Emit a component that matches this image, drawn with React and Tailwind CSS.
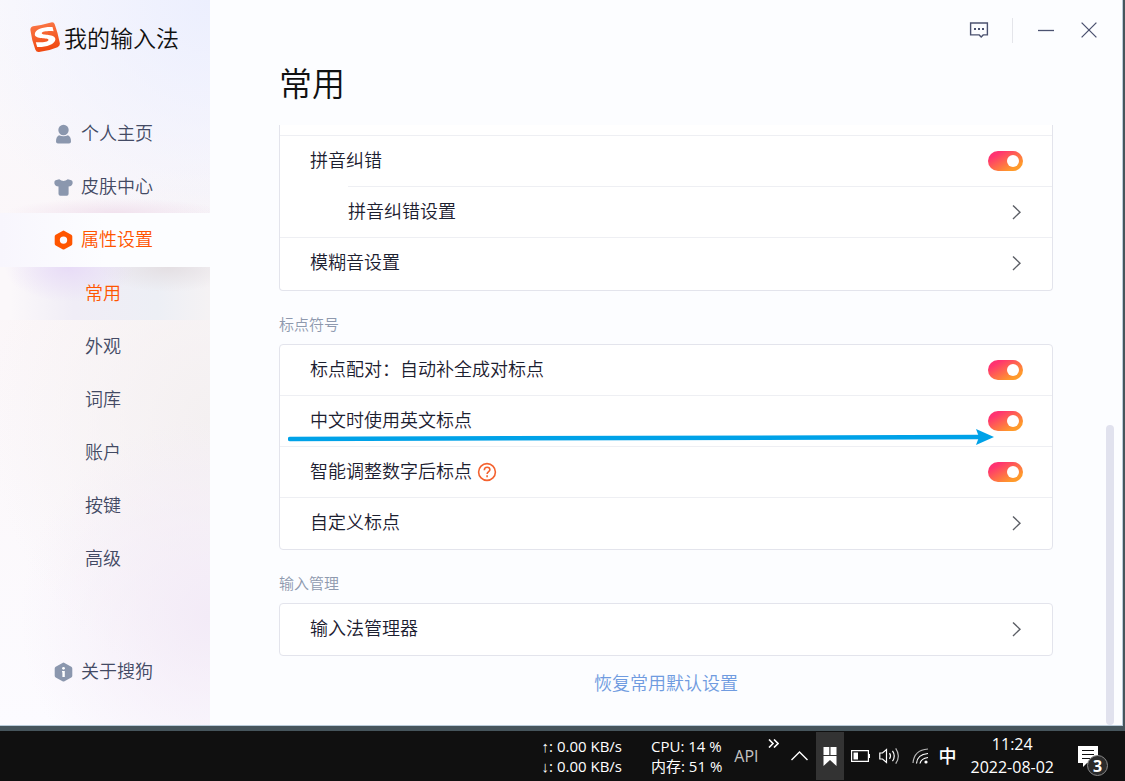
import { useState } from 'react'

const mainNav = [
  { id: 'home', label: '个人主页', icon: UserIcon },
  { id: 'skin', label: '皮肤中心', icon: ShirtIcon },
  { id: 'settings', label: '属性设置', icon: HexIcon }
]

const subNav = ['常用', '外观', '词库', '账户', '按键', '高级']

function Logo() {
  return (
    <svg className="size-[31px] shrink-0" viewBox="0 0 31 31" aria-hidden="true">
      <defs>
        <linearGradient id="logo" x1="0" y1="0" x2="0.2" y2="1">
          <stop offset="0" stopColor="#fb7a4a" />
          <stop offset="1" stopColor="#f04a12" />
        </linearGradient>
      </defs>
      <path
        d="M3 4.2Q12 3 21 0.4Q24 -0.3 24.8 2.4Q28 11 29.8 21Q30.3 24 27.5 25.2Q18 29.3 9 30Q6.3 30.2 5.3 27.4Q1.6 18 0.4 8Q0.3 4.7 3 4.2Z"
        fill="url(#logo)"
      />
      <path
        d="M22.5 5C14 4.600 5 7 4.800 12.200C4.700 17.800 18.500 15.200 18.500 17.800C18.500 20.300 11 20.600 5.800 20.200L7.200 25C15 25.400 25.300 22.600 25.400 17.200C25.500 11.400 11.800 13.700 11.800 11.200C11.800 9.400 18 8.800 23.600 9.200Z"
        fill="#fff"
      />
    </svg>
  )
}

function UserIcon() {
  return (
    <svg className="size-5" viewBox="0 0 20 20" fill="currentColor" aria-hidden="true">
      <circle cx="10.5" cy="6" r="5.200" />
      <path d="M6 11.200Q10.500 13.400 15 11.200Q18 12.500 18 17.500Q18 19.500 16 19.500H5Q3 19.500 3 17.500Q3 12.500 6 11.200Z" />
    </svg>
  )
}

function ShirtIcon() {
  return (
    <svg className="size-5" viewBox="0 0 20 20" fill="currentColor" aria-hidden="true">
      <path d="M6.200 2.200Q10.500 5.600 14.800 2.200L18.400 3.200Q19.600 3.700 19.600 4.900V6.500Q18.800 9.300 15.600 9.500V16.700Q15.600 18.700 13.800 18.700H7.300Q5.500 18.700 5.500 16.700V9.500Q2.200 9.300 1.400 6.500V4.900Q1.400 3.700 2.600 3.200Z" />
    </svg>
  )
}

function HexIcon() {
  return (
    <svg className="size-5" viewBox="0 0 20 20" aria-hidden="true">
      <path
        d="M9.500 0.900Q10.500 0.300 11.500 0.900L18.300 4.700Q19.300 5.300 19.300 6.400V13.800Q19.300 14.900 18.300 15.500L11.500 19.300Q10.500 19.900 9.500 19.300L2.700 15.500Q1.700 14.900 1.700 13.800V6.400Q1.700 5.300 2.700 4.700ZM10.500 6.400A3.700 3.700 0 1 0 10.500 13.800A3.700 3.700 0 1 0 10.500 6.400Z"
        fill="currentColor"
        fillRule="evenodd"
      />
    </svg>
  )
}

function AboutIcon() {
  return (
    <svg className="size-5" viewBox="0 0 20 20" aria-hidden="true">
      <path
        d="M9.500 0.900Q10.500 0.300 11.500 0.900L18.300 4.700Q19.300 5.300 19.300 6.400V13.800Q19.300 14.900 18.300 15.500L11.500 19.300Q10.500 19.900 9.500 19.300L2.700 15.500Q1.700 14.900 1.700 13.800V6.400Q1.700 5.300 2.700 4.700Z"
        fill="currentColor"
      />
      <circle cx="10.500" cy="6.300" r="1.400" fill="#fff" />
      <path d="M9 9H11.800V15H9.400V10.300H9Z" fill="#fff" />
    </svg>
  )
}

function Chevron() {
  return (
    <svg className="mr-px h-4 w-[10px]" viewBox="0 0 10 16" fill="none" stroke="#5c5f66" strokeWidth="1.400" aria-hidden="true">
      <path d="M1 1.500L8 8.200L1 15" />
    </svg>
  )
}

function Toggle({ label }) {
  const [on, setOn] = useState(true)
  return (
    <input
      type="checkbox"
      role="switch"
      aria-label={label}
      checked={on}
      onChange={() => setOn(!on)}
      className="h-5 w-[35px] cursor-pointer appearance-none rounded-full bg-gray-300 p-1 before:block before:size-3 before:rounded-full before:bg-white checked:bg-[linear-gradient(150deg,#ff3370_20%,#ff9a2b_80%)] checked:pl-[19px]"
    />
  )
}

function SwitchRow({ label, help, border = 'border-b' }) {
  return (
    <div className={`flex h-[51px] items-center justify-between border-[#eeeff3] pr-[29px] pl-[30px] ${border}`}>
      <span className="flex items-center gap-[5px]">
        <span className="pb-1">{label}</span>
        {help && (
          <button aria-label="帮助" className="text-[#f4622f]">
            <svg className="size-5" viewBox="0 0 20 20" fill="none" stroke="currentColor" strokeWidth="1.600" aria-hidden="true">
              <circle cx="10" cy="10" r="8.400" />
              <path d="M7.300 8.200C7.300 6.300 8.500 5.200 10.100 5.200C11.700 5.200 12.900 6.300 12.900 7.800C12.900 9.600 10.100 9.700 10.100 12" />
              <path d="M10.100 13.300V15.300" />
            </svg>
          </button>
        )}
      </span>
      <Toggle label={label} />
    </div>
  )
}

function LinkRow({ label }) {
  return (
    <button className="flex h-[51px] w-full items-center justify-between pr-[29px] pb-px pl-[30px] text-left">
      <span className="pb-1">{label}</span>
      <Chevron />
    </button>
  )
}

// Nested option, its top line starts where its label starts
function SubLinkRow({ label }) {
  return (
    <div className="border-b border-[#eeeff3] pl-[68px]">
      <button className="flex h-[51px] w-full items-center justify-between border-t border-[#eeeff3] pr-[29px] text-left">
        <span className="pb-1">{label}</span>
        <Chevron />
      </button>
    </div>
  )
}

function Section({ title, children }) {
  return (
    <section>
      <h2 className="flex h-[53px] items-end pb-[10px] text-[15px] leading-5 text-[#8e99ae]">{title}</h2>
      <div className="rounded border border-[#e3e4ec] bg-white">{children}</div>
    </section>
  )
}

function Sidebar() {
  const [active, setActive] = useState('常用')
  return (
    <aside className="flex w-[210px] shrink-0 flex-col bg-[radial-gradient(ellipse_250px_260px_at_100%_0%,#eceffe_0%,transparent_100%),radial-gradient(ellipse_190px_200px_at_100%_85%,#f3ebf7_0%,transparent_100%),radial-gradient(ellipse_220px_260px_at_100%_58%,#f4f0f1_0%,transparent_100%),linear-gradient(#faf9fd,#fbf6f8_40%,#fcfbff)] text-[#434a64]">
      <div className="flex h-[107px] items-start gap-[3px] pt-[22px] pl-[30px]">
        <Logo />
        <span className="text-[23px] leading-[31px] text-[#111]">我的输入法</span>
      </div>
      <nav className="flex flex-1 flex-col">
        {mainNav.map(({ id, label, icon: Icon }) => (
          <a
            key={id}
            href={`#${id}`}
            className={
              id === 'settings'
                ? 'flex h-[54px] items-center gap-2 bg-linear-to-r from-[#f8f6fd] to-[#fcfdff] to-50% pl-[53px] text-[#ff5500]'
                : `flex h-[53px] items-center gap-2 pl-[53px] ${id === 'skin' ? 'bg-[radial-gradient(ellipse_110px_15px_at_55%_100%,#f1e2ee_0%,transparent_100%)]' : ''}`
            }
          >
            <span className={id === 'settings' ? '' : 'text-[#8b97ae]'}>
              <Icon />
            </span>
            <span className="pb-1">{label}</span>
          </a>
        ))}
        {subNav.map((label) => (
          <a
            key={label}
            href={`#${label}`}
            onClick={() => setActive(label)}
            className={
              label === active
                ? 'flex h-[53px] items-center bg-[radial-gradient(ellipse_65px_35px_at_33%_0%,#e8dcf7_0%,transparent_100%),radial-gradient(ellipse_70px_25px_at_80%_0%,#e4dfe3_0%,transparent_100%),linear-gradient(to_right,#fbf8fa_5%,#f0edf6_35%,#edeff5_75%,#f5f2f4)] pb-1 pl-[85px] text-[#ff5500]'
                : 'flex h-[53px] items-center pb-1 pl-[85px]'
            }
          >
            {label}
          </a>
        ))}
        <a href="#about" className="mt-auto mb-[27px] flex h-[53px] items-center gap-2 pl-[53px]">
          <span className="text-[#8b97ae]">
            <AboutIcon />
          </span>
          <span className="pb-1">关于搜狗</span>
        </a>
      </nav>
    </aside>
  )
}

function WindowControls() {
  return (
    <div className="flex h-[60px] items-center justify-end pr-[25px] text-[#4b5270]">
      <button aria-label="反馈" className="mr-[23px]">
        <svg className="size-5" viewBox="0 0 20 20" fill="none" stroke="currentColor" strokeWidth="1.400" aria-hidden="true">
          <path d="M1.600 3H18.400V14.900H14.200L12.200 17L10.200 14.900H1.600Z" />
          <path d="M5 8.900H7M9 8.900H11M13 8.900H15" strokeWidth="2" />
        </svg>
      </button>
      <span className="h-[25px] w-px bg-[#e4e5ea]" />
      <button aria-label="最小化" className="ml-[25px]">
        <svg className="h-5 w-4" viewBox="0 0 16 20" stroke="currentColor" strokeWidth="1.300" aria-hidden="true">
          <path d="M0 10.500H16" />
        </svg>
      </button>
      <button aria-label="关闭" className="ml-[27px]">
        <svg className="size-4" viewBox="0 0 16 16" stroke="currentColor" strokeWidth="1.300" aria-hidden="true">
          <path d="M0.600 0.600L15.400 15.400M15.400 0.600L0.600 15.400" />
        </svg>
      </button>
    </div>
  )
}

// Blue marker drawn across the "中文时使用英文标点" row
function Arrow() {
  return (
    <svg
      className="pointer-events-none absolute bottom-[2px] left-2 h-4 w-[calc(100%-66px)]"
      viewBox="0 0 706 16"
      preserveAspectRatio="none"
      aria-hidden="true"
    >
      <path d="M2 10L692 8" stroke="#00a2e8" strokeWidth="4.500" strokeLinecap="round" />
      <path d="M688 0L706 8L688 16L691 8Z" fill="#00a2e8" />
    </svg>
  )
}

function Taskbar() {
  return (
    <footer className="flex h-[50px] shrink-0 items-center justify-end bg-[#101010] font-['Open_Sans','Liberation_Sans','Noto_Sans_CJK_SC',sans-serif] text-[15px] leading-5 font-normal text-white">
      <div className="mr-[29px] whitespace-nowrap">
        <p>↑: 0.00 KB/s</p>
        <p>↓: 0.00 KB/s</p>
      </div>
      <div className="mr-3 whitespace-nowrap">
        <p>CPU: 14 %</p>
        <p>内存: 51 %</p>
      </div>
      <span className="text-base text-[#c4c4c4]">API</span>
      <button aria-label="更多" className="mb-[26px] ml-[9px]">
        <svg className="h-[9px] w-[11px]" viewBox="0 0 11 9" fill="none" stroke="#fff" strokeWidth="1.600" aria-hidden="true">
          <path d="M1 0.500L5 4.500L1 8.500M6 0.500L10 4.500L6 8.500" />
        </svg>
      </button>
      <button aria-label="显示隐藏的图标" className="ml-3">
        <svg className="h-[10px] w-[17px]" viewBox="0 0 17 10" fill="none" stroke="#fff" strokeWidth="1.400" aria-hidden="true">
          <path d="M0.500 9L8.500 1L16.500 9" />
        </svg>
      </button>
      <button aria-label="书签" className="ml-2 flex h-12 w-7 items-center justify-center bg-[#333]">
        <svg className="h-[19px] w-[14px]" viewBox="0 0 14 19" fill="#fff" aria-hidden="true">
          <path d="M0.500 0H6.300V8H0.500ZM7.500 0H13.500V8H7.500ZM0.500 9H13.500V19L7 13L0.500 19Z" />
        </svg>
      </button>
      <svg className="ml-[7px] h-3 w-[19px]" viewBox="0 0 19 12" fill="none" stroke="#fff" strokeWidth="1.200" aria-hidden="true">
        <path d="M0.600 0.600H17.400V11.400H0.600ZM18.400 4V8" />
        <path d="M2.500 2.500H7V9.500H2.500Z" fill="#fff" stroke="none" />
      </svg>
      <svg className="ml-[9px] h-[18px] w-[22px]" viewBox="0 0 22 18" fill="none" stroke="#fff" strokeWidth="1.200" aria-hidden="true">
        <path d="M0.800 6H3.500L7.500 2.500V15.500L3.500 12H0.800ZM10.500 6.200Q12.500 9 10.500 11.800M13.500 3.800Q17 9 13.500 14.200" />
        <path d="M16.700 1.300Q22 9 16.700 16.700" opacity="0.700" />
      </svg>
      <svg className="ml-[11px] h-[18px] w-[17px]" viewBox="0 0 17 18" fill="none" stroke="#fff" strokeWidth="1.200" aria-hidden="true">
        <path d="M1 16Q2 3 16 2" opacity="0.700" />
        <path d="M4.500 16.500Q5 7.500 16 6.500M8 16.500Q9 11.500 16 10.500" />
        <circle cx="14" cy="15" r="1.600" fill="#fff" stroke="none" />
      </svg>
      <span className="ml-[10px] text-lg leading-5 font-medium">中</span>
      <time className="ml-[14px] text-center text-base leading-[23px] whitespace-nowrap">
        11:24
        <br />
        2022-08-02
      </time>
      <button aria-label="3 条新通知" className="relative mr-[27px] ml-6">
        <svg className="h-[22px] w-5" viewBox="0 0 20 22" aria-hidden="true">
          <path d="M0 1H20V18H9L5 22V18H0Z" fill="#fff" />
          <path d="M4 5.500H16M4 9.500H16M4 13.500H12" stroke="#101010" strokeWidth="1.200" />
        </svg>
        <span className="absolute top-[10px] left-[9px] flex size-[21px] items-center justify-center rounded-full border border-[#8a8a8a] bg-[#2b2b2b] text-base font-bold">
          3
        </span>
      </button>
    </footer>
  )
}

export default function App() {
  return (
    <div className="flex h-screen flex-col bg-[#46555c] font-['Noto_Sans_CJK_SC',sans-serif] text-lg font-[350] text-[#1c2030]">
      <div className="mr-[2px] mb-[5px] flex min-h-0 flex-1 border-r border-b border-[#b9cbd9] bg-[#fcfdff]">
        <Sidebar />
        <main className="flex min-w-0 flex-1 flex-col">
          <WindowControls />
          <h1 className="h-[65px] pl-[69px] text-[33px] leading-[44px] text-[#111]">常用</h1>
          <div className="flex min-h-0 flex-1">
            <div className="min-w-0 flex-1 overflow-hidden pr-[53px] pl-[69px]">
              <div className="rounded-b border border-t-0 border-[#e3e4ec] bg-white">
                <div className="h-[11px] border-b border-[#eeeff3]" />
                <SwitchRow label="拼音纠错" border="-mb-px border-b border-transparent" />
                <SubLinkRow label="拼音纠错设置" />
                <div className="pb-px">
                  <LinkRow label="模糊音设置" />
                </div>
              </div>
              <Section title="标点符号">
                <SwitchRow label="标点配对：自动补全成对标点" />
                <div className="relative">
                  <SwitchRow label="中文时使用英文标点" />
                  <Arrow />
                </div>
                <SwitchRow label="智能调整数字后标点" help />
                <LinkRow label="自定义标点" />
              </Section>
              <Section title="输入管理">
                <LinkRow label="输入法管理器" />
              </Section>
              <div className="mt-3 text-center">
                <a href="#reset" className="text-[#6f9be0]">
                  恢复常用默认设置
                </a>
              </div>
            </div>
            <div className="mr-2 flex w-2 flex-col justify-end">
              <div className="h-1/2 rounded-full bg-[#e1e2ee]" />
            </div>
          </div>
        </main>
      </div>
      <Taskbar />
    </div>
  )
}
